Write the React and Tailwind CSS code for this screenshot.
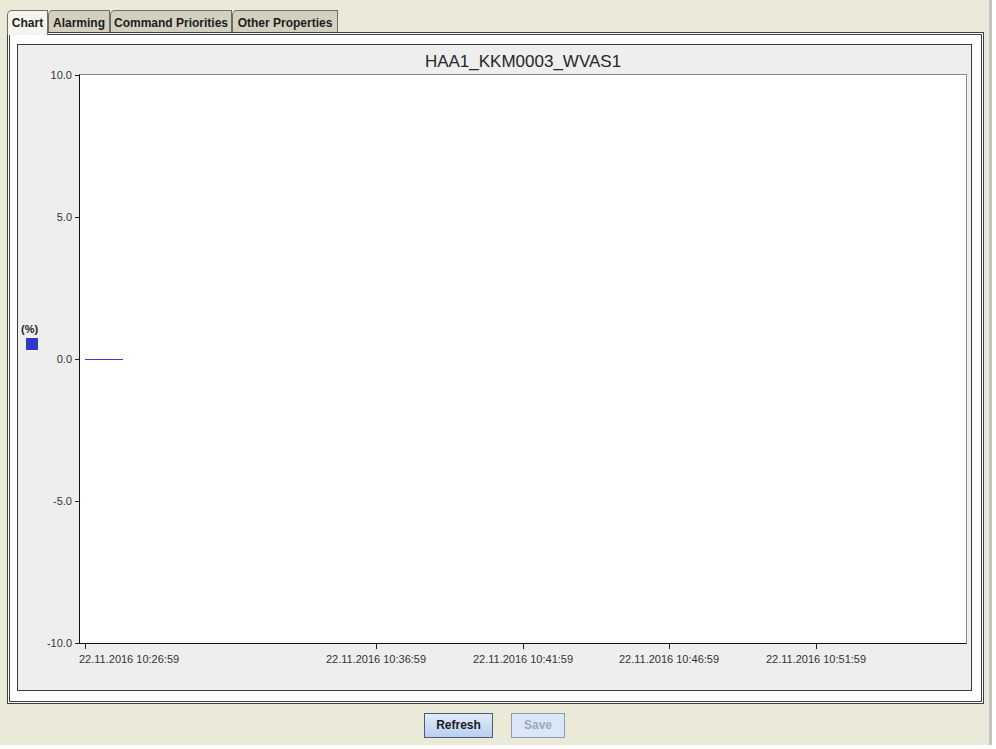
import React from 'react';

const tabs = [
  { label: 'Chart', w: 'w-[41px]', active: true },
  { label: 'Alarming', w: 'w-[62px]' },
  { label: 'Command Priorities', w: 'w-[122px]' },
  { label: 'Other Properties', w: 'w-[106px]' },
];

const yTicks = ['10.0', '5.0', '0.0', '-5.0', '-10.0'];

// x positions are relative to the chart panel's inner left edge
const xTicks = [
  { x: 67, label: '22.11.2016 10:26:59', clamp: true },
  { x: 358, label: '22.11.2016 10:36:59' },
  { x: 505, label: '22.11.2016 10:41:59' },
  { x: 651, label: '22.11.2016 10:46:59' },
  { x: 798, label: '22.11.2016 10:51:59' },
];

function Chart() {
  return (
    <div className="w-[955px] h-[647px] border border-[#3a3a3a] bg-[#eeeeee] flex flex-col">
      <div className="h-[29px] pl-[61px] pr-[4px] pt-[4px] flex items-center justify-center text-[17px] text-[#262626]">
        HAA1_KKM0003_WVAS1
      </div>

      <div className="flex h-[570px]">
        <div className="relative w-[61px] h-full text-[11px] text-[#333]">
          {yTicks.map((t, i) => {
            const y = 1 + i * 142;
            return (
              <React.Fragment key={t}>
                <span className="absolute right-[7px] leading-[13px]" style={{ top: y - 6 }}>{t}</span>
                <span className="absolute right-0 w-[4px] h-px bg-[#222]" style={{ top: y }} />
              </React.Fragment>
            );
          })}
          <span className="absolute left-[3px] top-[249px] leading-[13px] font-bold text-[#222]">(%)</span>
          <span className="absolute left-[8px] top-[264px] w-[12px] h-[12px] bg-[#3535c8]" />
        </div>
        <div className="relative w-[888px] h-full bg-white border border-t-[#8a8a8a] border-r-[#8a8a8a] border-l-[#111] border-b-[#111]">
          <svg className="absolute left-0 top-0" width="886" height="568">
            <line x1="5" y1="284.5" x2="43" y2="284.5" stroke="#3a3ae6" strokeWidth="1" />
          </svg>
        </div>
      </div>

      <div className="relative flex-1 text-[11px] text-[#333]">
        {xTicks.map((t) => (
          <React.Fragment key={t.label}>
            <span className="absolute top-0 w-px h-[5px] bg-[#222]" style={{ left: t.x }} />
            {t.clamp ? (
              <span className="absolute top-[9px] leading-[13px] whitespace-nowrap" style={{ left: 61 }}>{t.label}</span>
            ) : (
              <span className="absolute top-[9px] leading-[13px] whitespace-nowrap -translate-x-1/2" style={{ left: t.x }}>{t.label}</span>
            )}
          </React.Fragment>
        ))}
      </div>
    </div>
  );
}

export default function App() {
  return (
    <div className="w-[996px] h-[749px] bg-white flex font-['Liberation_Sans',Arial,sans-serif]">
      <div className="w-[989px] h-[745px] bg-[#ebe9d8] flex flex-col pl-[7px] pt-[10px]">
        <div className="h-[22px] flex items-start relative z-10">
          {tabs.map((t) =>
            t.active ? (
              <div key={t.label} className={`${t.w} h-[25px] bg-[#f5f4ef] border-l border-t border-r border-[#6e6e64] rounded-tl-[5px] flex items-start justify-center pt-[3px] text-[12px] font-bold text-[#1c1c1c]`}>
                {t.label}
              </div>
            ) : (
              <div key={t.label} className={`${t.w} h-[22px] bg-[#d3d0c0] border-l border-t border-r border-[#6e6e64] rounded-tl-[5px] flex items-start justify-center pt-[3px] text-[12px] font-bold text-[#1c1c1c]`}>
                {t.label}
              </div>
            )
          )}
        </div>

        <div className="w-[977px] h-[672px] border-[3px] border-double border-[#3f3f3f] bg-white pl-[7px] pt-[9px]">
          <Chart />
        </div>

        <div className="flex-1 -ml-[7px] flex items-center justify-center gap-[18px] pt-[1px]">
          <button className="w-[69px] h-[25px] border border-[#4e5b6e] bg-linear-to-b from-[#e2ecfb] to-[#b8cff0] text-[12px] font-bold text-[#1b1b1b]">
            Refresh
          </button>
          <button className="w-[54px] h-[25px] border border-[#8d9cb0] bg-[#dbe7f8] text-[12px] font-bold text-[#9aa8b8]">
            Save
          </button>
        </div>
      </div>
      <div className="w-[3px] h-[745px] bg-[#c4c4c4]" />
    </div>
  );
}
